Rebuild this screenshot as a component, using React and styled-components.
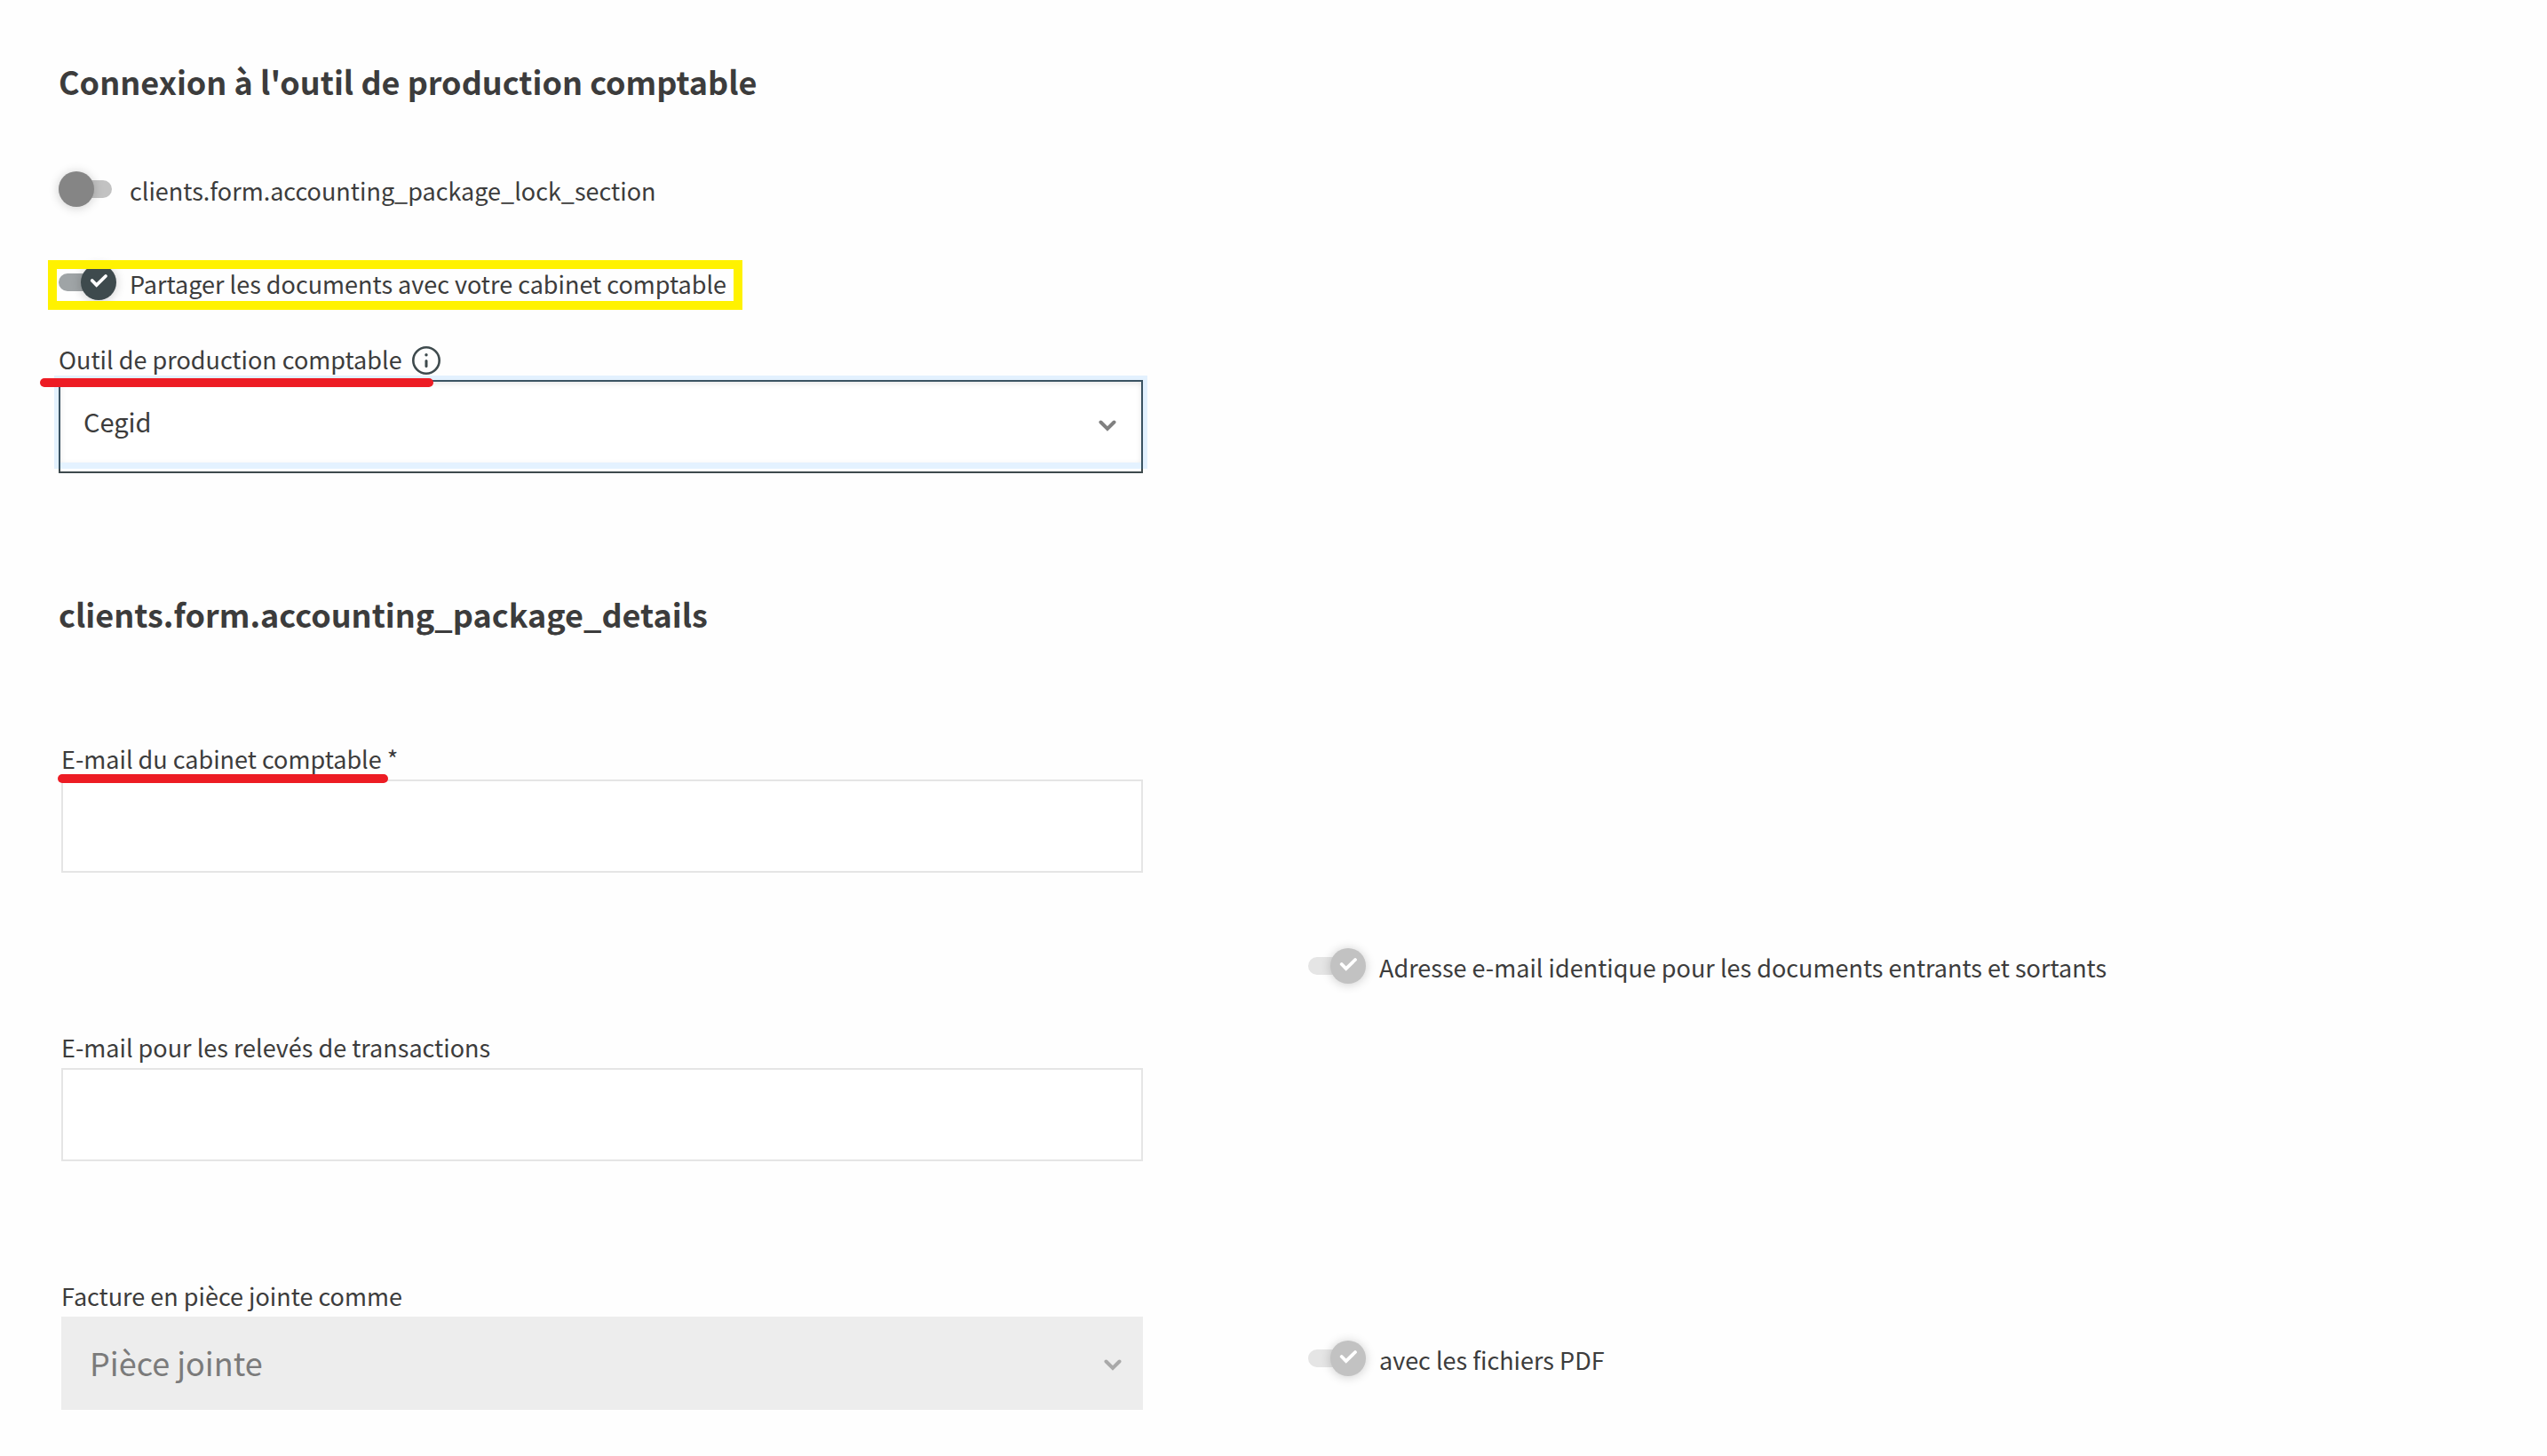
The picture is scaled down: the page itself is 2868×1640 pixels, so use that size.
import React, { useState } from 'react'
import styled, { createGlobalStyle, css } from 'styled-components'

const GlobalStyle = createGlobalStyle`
    * {
        box-sizing: border-box;
    }
    body {
        margin: 0;
        background: #fefefe;
        color: #3c3c3c;
        font-family: "Noto Sans CJK SC", "Noto Sans", sans-serif;
    }
`

const Switch = ({ id, label, defaultChecked, disabled, highlighted }) => {
    const [checked, setChecked] = useState(Boolean(defaultChecked))

    return (
        <SwitchRow $highlighted={highlighted}>
            <SwitchControl>
                <Track $checked={checked} $disabled={disabled} />
                <Knob $checked={checked} $disabled={disabled}>
                    {checked && (
                        <svg width="40" height="40" viewBox="0 0 40 40" fill="none" aria-hidden="true">
                            <path d="M12.7 18l5 5L28 13" stroke="#fff" strokeWidth="3.8" strokeLinecap="round" />
                        </svg>
                    )}
                </Knob>
                <SwitchInput
                    type="checkbox"
                    id={id}
                    checked={checked}
                    disabled={disabled}
                    onChange={(e) => setChecked(e.target.checked)}
                />
            </SwitchControl>
            <SwitchLabel htmlFor={id}>{label}</SwitchLabel>
        </SwitchRow>
    )
}

const Chevron = ({ color }) => (
    <ChevronIcon width="20" height="14" viewBox="0 0 20 14" fill="none" aria-hidden="true">
        <path d="M2.5 2.5L10 10l7.5-7.5" stroke={color} strokeWidth="4" strokeLinecap="round" />
    </ChevronIcon>
)

const App = () => {
    return (
        <>
            <GlobalStyle />
            <Page>
                <Section>
                    <Title>Connexion à l'outil de production comptable</Title>
                    <SwitchList>
                        <Switch id="lock" label="clients.form.accounting_package_lock_section" />
                        <Switch
                            id="share"
                            label="Partager les documents avec votre cabinet comptable"
                            defaultChecked
                            highlighted
                        />
                    </SwitchList>
                    <ToolGrid>
                        <Field>
                            <LabelRow>
                                <Marked $start={21} $end={-35} $top={41}>
                                    <Label htmlFor="tool">Outil de production comptable</Label>
                                </Marked>
                                <InfoButton type="button" aria-label="Information">
                                    <svg width="32" height="32" viewBox="0 0 32 32" fill="none">
                                        <circle cx="16" cy="16" r="14.7" stroke="#3e4a4d" strokeWidth="2.6" />
                                        <circle cx="16" cy="9.8" r="1.7" fill="#3e4a4d" />
                                        <path d="M16 16.4v6.2" stroke="#3e4a4d" strokeWidth="3" strokeLinecap="round" />
                                    </svg>
                                </InfoButton>
                            </LabelRow>
                            <FocusBox>
                                <ToolSelect id="tool" defaultValue="cegid">
                                    <option value="cegid">Cegid</option>
                                </ToolSelect>
                                <Chevron color="#808080" />
                            </FocusBox>
                        </Field>
                    </ToolGrid>
                </Section>

                <Section>
                    <Title>clients.form.accounting_package_details</Title>
                    <DetailsGrid>
                        <Field>
                            <LabelRow>
                                <Marked $start={4} $end={-7} $top={37}>
                                    <Label htmlFor="email">E-mail du cabinet comptable</Label>
                                </Marked>
                                <Required>*</Required>
                            </LabelRow>
                            <TextInput type="email" id="email" required />
                        </Field>
                        <SameAddress>
                            <Switch
                                id="same"
                                label="Adresse e-mail identique pour les documents entrants et sortants"
                                defaultChecked
                                disabled
                            />
                        </SameAddress>
                        <TransactionsField>
                            <LabelRow>
                                <Label htmlFor="transactions">E-mail pour les relevés de transactions</Label>
                            </LabelRow>
                            <TextInput type="email" id="transactions" />
                        </TransactionsField>
                        <AttachmentField>
                            <LabelRow>
                                <Label htmlFor="attachment">Facture en pièce jointe comme</Label>
                            </LabelRow>
                            <DisabledBox>
                                <AttachmentSelect id="attachment" defaultValue="attachment" disabled>
                                    <option value="attachment">Pièce jointe</option>
                                </AttachmentSelect>
                                <Chevron color="#a9a9a9" />
                            </DisabledBox>
                        </AttachmentField>
                        <PdfOption>
                            <Switch id="pdf" label="avec les fichiers PDF" defaultChecked disabled />
                        </PdfOption>
                    </DetailsGrid>
                </Section>
            </Page>
        </>
    )
}

const Page = styled.main`
    display: flex;
    flex-direction: column;
    gap: 132px;
    padding: 65px 177px 52px 66px;
`

const Section = styled.section`
    display: flex;
    flex-direction: column;
`

const Title = styled.h2`
    margin: 0;
    font-size: 36px;
    line-height: 52px;
    font-weight: 700;
`

const SwitchList = styled.div`
    display: flex;
    flex-direction: column;
    align-items: flex-start;
    gap: 65px;
    margin: 76px 0 46px;
`

const SwitchRow = styled.div`
    position: relative;
    display: flex;
    align-items: center;
    gap: 15px;
    height: 40px;

    ${(props) => props.$highlighted && css`
        &::after {
            content: "";
            position: absolute;
            inset: -5px -18px -11px -12px;
            border: 10px solid #fff200;
            pointer-events: none;
        }
    `}
`

const SwitchControl = styled.div`
    position: relative;
    display: flex;
    align-items: center;
    width: 65px;
    height: 40px;
`

const Track = styled.span`
    width: 60px;
    height: 20px;
    border-radius: 10px;
    background: ${(props) => (props.$disabled ? '#e5e5e5' : props.$checked ? '#9fa4a6' : '#c2c2c2')};
`

const Knob = styled.span`
    position: absolute;
    top: 0;
    left: ${(props) => (props.$checked ? '25px' : '0')};
    width: 40px;
    height: 40px;
    border-radius: 50%;
    background: ${(props) => (props.$disabled ? '#c2c2c2' : props.$checked ? '#3e4a4d' : '#858585')};
    box-shadow: 0 1px 12px rgb(0 0 0 / 20%);
`

const SwitchInput = styled.input`
    position: absolute;
    inset: 0;
    width: 100%;
    height: 100%;
    margin: 0;
    opacity: 0;
`

const SwitchLabel = styled.label`
    padding-top: 4px;
    font-size: 27px;
    line-height: 40px;
    white-space: nowrap;
`

const ToolGrid = styled.div`
    display: grid;
    grid-template-columns: 1fr 1fr;
    column-gap: 183px;
`

const DetailsGrid = styled.div`
    display: grid;
    grid-template-columns: 1fr 1fr;
    column-gap: 186px;
    margin-top: 117px;
    padding-left: 3px;
`

const Field = styled.div`
    display: flex;
    flex-direction: column;
    gap: 4px;
    min-width: 0;
`

const SameAddress = styled.div`
    grid-column: 2;
    grid-row: 2;
    margin-top: 85px;
`

const TransactionsField = styled(Field)`
    grid-column: 1;
    grid-row: 3;
    margin: 51px 0 131px;
`

const AttachmentField = styled(Field)`
    grid-column: 1;
    grid-row: 4;
`

const PdfOption = styled.div`
    grid-column: 2;
    grid-row: 4;
    align-self: end;
    padding-bottom: 38px;
`

const LabelRow = styled.div`
    display: flex;
    align-items: center;
    height: 40px;
    padding-top: 2px;
`

const Label = styled.label`
    font-size: 27px;
    line-height: 40px;
    white-space: nowrap;
`

const Required = styled.span`
    margin-left: 6px;
    font-size: 27px;
    line-height: 40px;
`

/* hand drawn red marker under a label */
const Marked = styled.div`
    position: relative;

    &::after {
        content: "";
        position: absolute;
        z-index: 1;
        top: ${(props) => props.$top}px;
        left: -${(props) => props.$start}px;
        right: ${(props) => props.$end}px;
        height: 10px;
        border-radius: 5px;
        background: #ed1c24;
    }
`

const InfoButton = styled.button`
    display: flex;
    margin-left: 11px;
    padding: 2px 0 0;
    border: 0;
    background: none;
`

const TextInput = styled.input`
    width: 100%;
    height: 105px;
    padding: 0 28px;
    border: 2px solid #e5e5e5;
    border-radius: 0;
    background: #fff;
    color: inherit;
    font: inherit;
    font-size: 29px;
    outline: none;
`

const SelectBox = styled.div`
    position: relative;
    height: 105px;
`

const FocusBox = styled(SelectBox)`
    border: 2px solid #3e4a4d;
    background: #fff;

    svg {
        right: 28px;
        top: 43px;
    }
`

const DisabledBox = styled(SelectBox)`
    background: #ededed;

    svg {
        right: 24px;
        top: 48px;
    }
`

const Select = styled.select`
    display: block;
    width: 100%;
    border: 0;
    border-radius: 0;
    background: none;
    color: inherit;
    font: inherit;
    appearance: none;
    outline: none;
`

const ToolSelect = styled(Select)`
    height: 91px;
    padding: 0 60px 4px 26px;
    font-size: 29px;
    box-shadow: 0 0 0 7px rgb(33 150 255 / 12%), inset 0 2px 6px rgb(0 0 0 / 10%);
`

const AttachmentSelect = styled(Select)`
    height: 105px;
    padding: 0 60px 3px 32px;
    color: #7b7b7b;
    font-size: 36px;
    opacity: 1;
`

const ChevronIcon = styled.svg`
    position: absolute;
    pointer-events: none;
`

export default App
